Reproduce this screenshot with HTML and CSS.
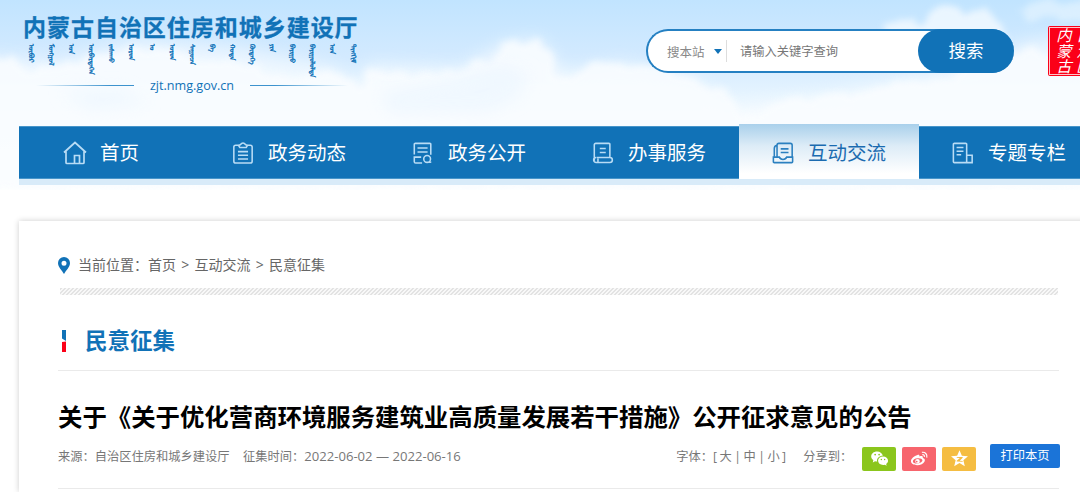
FILE: index.html
```html
<!DOCTYPE html>
<html lang="zh-CN">

<head>
    <meta charset="UTF-8">
    <meta name="viewport" content="width=device-width, initial-scale=1.0">
    <title>民意征集 - 内蒙古自治区住房和城乡建设厅</title>
    <link rel="stylesheet" href="styles.css">
</head>

<body>
    <!-- 天空背景 -->
    <svg class="sky" viewBox="0 0 1080 190" preserveAspectRatio="none" aria-hidden="true">
        <defs>
            <linearGradient id="skyFill" x1="0" y1="0" x2="0" y2="1">
                <stop offset="0" stop-color="#c1e4ff" />
                <stop offset=".3" stop-color="#d3eaff" />
                <stop offset=".5" stop-color="#e6f4ff" />
                <stop offset=".7" stop-color="#f8fcff" />
                <stop offset="1" stop-color="#fff" />
            </linearGradient>
            <filter id="cloud" filterUnits="userSpaceOnUse" x="-60" y="-60" width="1200" height="320">
                <feTurbulence type="fractalNoise" baseFrequency=".05" numOctaves="4" seed="7" />
                <feDisplacementMap in="SourceGraphic" scale="18" xChannelSelector="R" yChannelSelector="G" />
                <feGaussianBlur stdDeviation="3" />
            </filter>
            <filter id="haze" filterUnits="userSpaceOnUse" x="-60" y="-60" width="1200" height="320">
                <feGaussianBlur stdDeviation="8" />
            </filter>
        </defs>
        <rect width="1080" height="190" fill="url(#skyFill)" />
        <g filter="url(#haze)" fill="#fafdff" opacity=".6">
            <path d="M-20 56 L60 60 L140 38 L240 48 L330 66 L360 84 L370 64 L460 68 L504 42 L540 38 L565 72 L620 62 L690 76 L735 108 L820 96 L895 80 L980 60 L1030 40 L1100 36 V190 H-20Z" />
        </g>
        <g filter="url(#cloud)" fill="#fafdff" opacity=".8">
            <path d="M-20 60 L12 58 L30 70 L70 64 L100 54 L140 44 L165 50 L200 60 L240 64 L290 78 L330 70 L350 80 L362 90 L370 68 L400 72 L430 76 L460 70 L475 60 L490 62 L500 44 L520 42 L540 38 L550 60 L562 76 L580 70 L605 60 L625 66 L660 70 L690 78 L725 90 L740 118 L760 112 L790 98 L820 96 L870 90 L895 80 L930 84 L980 60 L1030 48 L1050 54 L1100 44 V190 H-20Z" />
        </g>
        <g filter="url(#cloud)" fill="#fafdff" opacity=".7">
            <path d="M886 28 L900 20 L912 16 L922 26 L930 12 L945 6 L962 12 L975 8 L992 16 L1000 28 L1010 40 H890Z" />
            <path d="M1014 12 L1035 2 H1100 V22 L1060 20 L1030 17Z" opacity=".6" />
        </g>
        <g filter="url(#haze)" fill="#e8f4ff" opacity=".5">
            <path d="M380 92 L450 78 L500 64 L528 72 L520 96 L490 112 L390 114Z" />
            <path d="M60 92 L120 88 L150 104 L90 110Z" />
        </g>
    </svg>

    <header class="header">
        <div class="logo">
            <h1 class="logo-name">内蒙古自治区住房和城乡建设厅</h1>
            <div class="logo-mongol" lang="mn-Mong">
                <span>ᠥᠪᠥᠷ</span>
                <span>ᠮᠣᠩᠭᠣᠯ</span>
                <span>ᠤᠨ</span>
                <span>ᠥᠪᠡᠷᠲᠡᠭᠡᠨ</span>
                <span>ᠵᠠᠰᠠᠬᠤ</span>
                <span>ᠣᠷᠣᠨ</span>
                <span>ᠤ</span>
                <span>ᠣᠷᠣᠨ</span>
                <span>ᠰᠠᠭᠤᠴᠠ</span>
                <span>ᠪᠠ</span>
                <span>ᠬᠣᠲᠠ</span>
                <span>ᠬᠥᠳᠡᠭᠡ</span>
                <span>ᠶᠢᠨ</span>
                <span>ᠪᠠᠶᠢᠭᠤ</span>
                <span>ᠪᠠᠶᠢᠭᠤᠯᠤᠯᠲᠠ</span>
                <span>ᠤᠨ</span>
                <span>ᠲᠢᠩᠬᠢᠮ</span>
            </div>
            <div class="logo-url">zjt.nmg.gov.cn</div>
        </div>

        <div class="search">
            <span class="search-scope">搜本站</span>
            <i class="search-arrow"></i>
            <span class="search-input">请输入关键字查询</span>
            <span class="search-btn">搜索</span>
        </div>

        <div class="seal">
            <div class="seal-text">内蒙古<br>自治区</div>
        </div>
    </header>

    <nav class="nav">
        <a class="nav-item nav-home">
            <svg class="icon" viewBox="0 0 24 24">
                <path d="M1 11.500 12 1.500l11 10M3 10.500V21.500a1 1 0 0 0 1 1H20a1 1 0 0 0 1-1V10.500M11.500 22v-7.500h5V22" />
            </svg>
            <span>首页</span>
        </a>
        <a class="nav-item">
            <svg class="icon" viewBox="0 0 24 24">
                <path d="M7 3.500H4a2 2 0 0 0-2 2V21a2 2 0 0 0 2 2H20a2 2 0 0 0 2-2V5.500a2 2 0 0 0-2-2H17M7 3.500 9 3Q12-1 15 3L17 3.500 15.500 6h-7ZM6.500 10.500h11M6.500 14.500h11M6.500 18.500h11" />
            </svg>
            <span>政务动态</span>
        </a>
        <a class="nav-item">
            <svg class="icon" viewBox="0 0 24 24">
                <path d="M20.500 14V2.500a1 1 0 0 0-1-1H3.500a1 1 0 0 0-1 1V13.500M2.500 15.500v6a1.500 1.500 0 0 0 1.500 1.500h7M6 6.500h11M6 11h11M2 16.500h8" />
                <circle cx="16.500" cy="18.500" r="3.700" />
                <path d="M18.500 22h2.500" />
            </svg>
            <span>政务公开</span>
        </a>
        <a class="nav-item">
            <svg class="icon" viewBox="0 0 24 24">
                <path d="M19.500 16V2.500a1 1 0 0 0-1-1H4a1.500 1.500 0 0 0-1.500 1.500V20.500M8.500 7h6.500M8.500 11.500h6.500M5 17H19.500a2.700 2.700 0 0 1 0 5.400H4.500a2.700 2.700 0 0 1 0-5.400M6.500 18v3.500" />
            </svg>
            <span>办事服务</span>
        </a>
        <a class="nav-item active">
            <svg class="icon" viewBox="0 0 24 24">
                <path d="M5.500 16V3.500a2 2 0 0 1 2-2H20a2 2 0 0 1 2 2V16M5.500 3.500Q2.500 4 2.500 7V16M9.500 7.500h8.500M9.500 11.500h8.500M1.500 16.500H8q1 2.500 4 2.500t4-2.500h6.500V21.500a1 1 0 0 1-1 1H2.500a1 1 0 0 1-1-1Z" />
            </svg>
            <span>互动交流</span>
        </a>
        <a class="nav-item">
            <svg class="icon" viewBox="0 0 24 24">
                <path d="M16 22.500V2.500a1 1 0 0 0-1-1H2.500a1 1 0 0 0-1 1V21.500a1 1 0 0 0 1 1H22V14.500H16M5 6h7.500M5 10h7.500M5 14h5" />
            </svg>
            <span>专题专栏</span>
        </a>
    </nav>

    <main class="card">
        <div class="crumbs">
            <svg class="pin" viewBox="0 0 12 17">
                <path fill-rule="evenodd" d="M6 0a6 6 0 0 0-6 6c0 4 4 7.500 6 11 2-3.500 6-7 6-11a6 6 0 0 0-6-6Zm0 3.700a2.500 2.500 0 1 1 0 5 2.500 2.500 0 0 1 0-5Z" />
            </svg>
            <span>当前位置：</span>
            <a>首页</a>
            <i>&gt;</i>
            <a>互动交流</a>
            <i>&gt;</i>
            <a>民意征集</a>
        </div>
        <div class="stripes"></div>

        <h2 class="column-title">
            <svg class="mark" viewBox="0 0 4 22">
                <path fill="#1172b7" d="M0 0h4v11L0 8.500Z" />
                <path fill="#fb0018" d="M0 12 4 11.500V22H0Z" />
            </svg>
            民意征集
        </h2>

        <h3 class="article-title">关于《关于优化营商环境服务建筑业高质量发展若干措施》公开征求意见的公告</h3>

        <div class="meta">
            <span class="source">来源：自治区住房和城乡建设厅</span>
            <span>征集时间：</span>
            <span class="date">2022-06-02 — 2022-06-16</span>
            <span class="font-size">字体：<b>[ 大 | 中 | 小 ]</b></span>
            <span class="share-label">分享到：</span>
            <a class="share wechat">
                <svg viewBox="0 0 24 24">
                    <path fill-rule="evenodd" d="M9 3C4.600 3 1.500 5.800 1.500 9.300c0 2 1 3.700 2.700 4.900L3.500 17l2.900-1.600c.9.200 1.700.300 2.600.300-.8-4 2.700-7.200 7.200-7.200C15.500 5.200 12.500 3 9 3ZM6.500 6a1.100 1.100 0 1 1 0 2.200 1.100 1.100 0 0 1 0-2.200Zm5 0a1.100 1.100 0 1 1 0 2.200 1.100 1.100 0 0 1 0-2.200Z" />
                    <path fill-rule="evenodd" d="M16.500 9.500c-3.700 0-6.300 2.400-6.300 5.300s2.600 5.300 6.300 5.300c.8 0 1.500-.1 2.200-.3l2.300 1.400-.6-2.300c1.500-1 2.400-2.400 2.400-4.100 0-2.900-2.600-5.300-6.300-5.300Zm-2.200 2.800a.9.900 0 1 1 0 1.800.9.900 0 0 1 0-1.800Zm4.200 0a.9.900 0 1 1 0 1.800.9.900 0 0 1 0-1.800Z" />
                </svg>
            </a>
            <a class="share weibo">
                <svg viewBox="0 0 24 24">
                    <path fill-rule="evenodd" d="M9.500 7.500c1.700-.7 2.800.2 2.400 2 2.800-1.100 4.800-.5 4.300 1.800 2.300.6 3.200 2.300 2.200 4.500-1.300 3-5.200 4.700-9.200 4.700-4.600 0-8-2.200-8-5.300 0-2.800 4-6.500 8.300-7.700Zm.2 4.200c-3.600.3-6.200 2-6.100 4 .1 1.900 2.900 3 6.200 2.700 3.500-.3 6-2.200 5.900-4.100-.2-1.900-2.800-2.900-6-2.600Z" />
                    <path fill-rule="evenodd" d="M9.500 12.500a2.900 2.900 0 1 0 0 5.800 2.900 2.900 0 0 0 0-5.800Zm-1 2.200a1.100 1.100 0 1 1 0 2.200 1.100 1.100 0 0 1 0-2.200Z" />
                    <path class="wave" d="M15 4.200c4-.7 7.200 2.300 6.200 6.800M15.600 7.200c1.800-.2 3 1 2.500 2.800" />
                </svg>
            </a>
            <a class="share qzone">
                <svg viewBox="0 0 24 24">
                    <path fill-rule="evenodd" d="m12 1.500 3 7 7.700.7-5.800 5 1.800 7.500L12 17.800l-6.700 3.900 1.800-7.500-5.800-5L9 8.500ZM8.500 10v1.200l4 .2L8.500 14.800v1l7.500.4v-1.200l-3.700-.3L16 11v-.8Z" />
                </svg>
            </a>
            <a class="print">打印本页</a>
        </div>
    </main>
</body>

</html>
```

FILE: styles.css
```css
* {
    box-sizing: border-box;
}

body {
    margin: 0;
    height: 492px;
    overflow: hidden;
    position: relative;
    background: #fff;
    color: #666;
    font-family: "Open Sans", "Noto Sans CJK SC", sans-serif;
    font-size: 12.25px;
}

h1, h2, h3 {
    margin: 0;
}

i, b {
    font-style: normal;
    font-weight: normal;
}

/* 天空铺在页头和导航后面 */
.sky {
    position: absolute;
    top: 0;
    left: 0;
    width: 1080px;
    height: 190px;
    z-index: -1;
}

.header {
    display: flex;
    align-items: flex-start;
    width: 1120px;
    height: 126px;
}

.logo {
    width: 350px;
    margin-left: 23px;
    padding-top: 12px;
    color: #1172b7;
}

.logo-name {
    font-size: 23px;
    line-height: 30px;
    letter-spacing: 0.97px;
    white-space: nowrap;
    -webkit-text-stroke: 0.3px #1172b7;
}

.logo-mongol {
    display: flex;
    gap: 8.1px;
    height: 34px;
    margin: 2px 0 0 4px;
    font-family: "Noto Sans Mongolian", "Mongolian Baiti", "Noto Sans CJK SC", sans-serif;
    font-size: 6.8px;
    line-height: 12px;
    -webkit-text-stroke: 0.4px #1172b7;
}

.logo-mongol span {
    width: 12px;
    flex: none;
    writing-mode: vertical-lr;
    white-space: nowrap;
}

.logo-url {
    display: flex;
    align-items: center;
    width: 312px;
    margin-left: 13px;
    font-size: 12.6px;
    font-weight: 500;
    line-height: 15px;
    justify-content: space-between;
}

.logo-url::before,
.logo-url::after {
    content: "";
    width: 98px;
    height: 1px;
    background: linear-gradient(to right, rgba(61, 147, 206, 0), #3d93ce 75%);
}

.logo-url::after {
    background: linear-gradient(to left, rgba(61, 147, 206, 0), #3d93ce 75%);
}

.search {
    display: flex;
    align-items: center;
    width: 368px;
    height: 44px;
    margin: 29px 0 0 273px;
    padding-left: 19px;
    border: 2px solid #2580c2;
    border-right: 0;
    border-radius: 22px;
    background: #fff;
    color: #888;
}

.search-scope {
    width: 47px;
    font-size: 12.5px;
}

.search-arrow {
    border: 4px solid transparent;
    border-top: 5px solid #1172b7;
    border-bottom: 0;
}

.search-input {
    flex: 1;
    height: 22px;
    margin-left: 4px;
    padding-left: 13px;
    border-left: 1px solid #ddd;
    line-height: 23px;
    color: #777;
}

.search-btn {
    width: 96px;
    height: 44px;
    border-radius: 22px;
    background: #1172b7;
    color: #fff;
    font-size: 17.5px;
    line-height: 43px;
    text-align: center;
}

.seal {
    width: 52px;
    height: 50px;
    margin: 26px 0 0 34px;
    padding: 1px;
    border-radius: 2px;
    background: #fb0018;
}

.seal-text {
    height: 48px;
    padding-left: 3px;
    border: 1px solid #ffc4c9;
    color: #fff;
    font-size: 15.3px;
    font-style: italic;
    line-height: 20px;
    writing-mode: vertical-lr;
    white-space: nowrap;
}

.nav {
    display: flex;
    width: 1081px;
    height: 59px;
    margin-left: 19px;
    border-bottom: 6px solid #d8ebf9;
    background: #1172b7;
    box-shadow: inset 0 1px #4795ca, inset 0 -1px #4795ca;
}

.nav-item {
    display: flex;
    flex: none;
    align-items: center;
    width: 180px;
    height: 53px;
    padding-left: 33px;
    color: #fff;
    font-size: 19.5px;
    line-height: 53px;
}

.nav-item .icon {
    width: 22px;
    height: 22px;
    margin-right: 14px;
    fill: none;
    stroke: #b9dcf5;
    stroke-width: 1.7;
}

.nav-home {
    padding-left: 44px;
}

.nav-home .icon {
    width: 24px;
    height: 24px;
    margin-right: 13px;
}

.nav-item.active {
    height: 55px;
    margin-top: -2px;
    padding-top: 2px;
    background: linear-gradient(#a9d0eb, #ddecf7 40%, #fff 90%);
    color: #1b6bb0;
}

.nav-item.active .icon {
    stroke: #2b80c0;
}

.card {
    width: 1080px;
    height: 271px;
    margin: 36px 0 0 19px;
    padding: 34px 40px 0 39px;
    background: #fff;
    box-shadow: 0 0 6px rgba(0, 0, 0, 0.2);
}

.crumbs {
    display: flex;
    align-items: center;
    height: 20px;
    font-size: 14px;
    line-height: 20px;
}

.crumbs i {
    width: 18.5px;
    text-align: center;
}

.pin {
    width: 12px;
    height: 17px;
    margin-right: 8px;
    fill: #1172b7;
}

.stripes {
    height: 7px;
    margin: 13px 1px 0 2px;
    background: linear-gradient(135deg, #e3e3e3 25%, #f8f8f8 25% 50%, #e3e3e3 50% 75%, #f8f8f8 75%);
    background-size: 4px 4px;
}

.column-title {
    display: flex;
    align-items: center;
    height: 76px;
    padding: 26px 0 9px 4px;
    border-bottom: 1px solid #eaeaea;
    color: #1172b7;
    font-size: 22.5px;
    line-height: 30px;
}

.mark {
    width: 4px;
    height: 22px;
    margin-right: 19px;
}

.article-title {
    margin-top: 28px;
    color: #000;
    font-size: 24.4px;
    line-height: 36px;
    white-space: nowrap;
}

.meta {
    display: flex;
    align-items: center;
    height: 54px;
    padding-bottom: 11px;
    border-bottom: 1px solid #eaeaea;
    color: #777;
    white-space: nowrap;
}

.source {
    width: 185px;
}

.date {
    width: 157px;
    font-size: 13.1px;
}

.font-size {
    width: 127px;
    margin-left: 215px;
}

.font-size b {
    letter-spacing: -0.35px;
}

.share-label {
    width: 59px;
}

.share {
    display: flex;
    align-items: center;
    justify-content: center;
    width: 34px;
    height: 24px;
    margin: 5px 6px 0 0;
    border-radius: 2px;
}

.share svg {
    width: 19px;
    height: 19px;
    fill: #fff;
}

.wechat {
    background: #8bc61d;
}

.weibo {
    background: #f7656d;
}

.weibo .wave {
    fill: none;
    stroke: #fff;
    stroke-width: 1.5;
}

.qzone {
    background: #f5bd42;
}

.print {
    width: 70px;
    height: 24px;
    margin-left: auto;
    margin-right: -1px;
    border-radius: 2px;
    background: #1b74d8;
    color: #fff;
    line-height: 23px;
    text-align: center;
}
```
